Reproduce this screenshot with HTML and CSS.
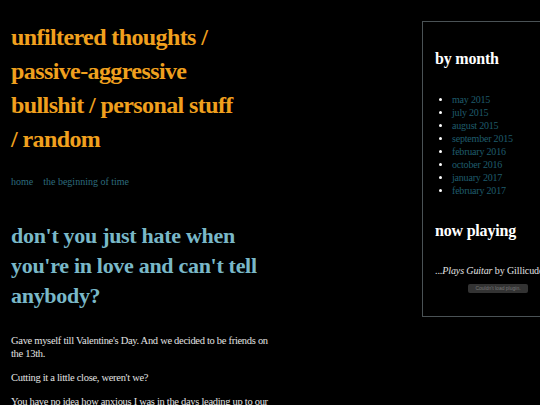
FILE: index.html
```html
<!DOCTYPE html>
<html>
<head>
<meta charset="utf-8">
<link rel="stylesheet" href="styles.css">
</head>
<body>
<div class="page">
  <main class="main">
    <h1 class="site-title">unfiltered thoughts / passive-aggressive bullshit / personal stuff /&nbsp;random</h1>
    <nav class="nav"><a href="#">home</a><a href="#">the beginning of time</a></nav>
    <article class="post">
      <h2 class="post-title">don't you just hate when you're in love and can't tell anybody?</h2>
      <p>Gave myself till Valentine's Day. And we decided to be friends on the 13th.</p>
      <p>Cutting it a little close, weren't we?</p>
      <p>You have no idea how anxious I was in the days leading up to our conversation.</p>
    </article>
  </main>
  <aside class="sidebar">
    <h3 class="side-title">by month</h3>
    <ul class="months">
      <li><a href="#">may 2015</a></li>
      <li><a href="#">july 2015</a></li>
      <li><a href="#">august 2015</a></li>
      <li><a href="#">september 2015</a></li>
      <li><a href="#">february 2016</a></li>
      <li><a href="#">october 2016</a></li>
      <li><a href="#">january 2017</a></li>
      <li><a href="#">february 2017</a></li>
    </ul>
    <h3 class="side-title np">now playing</h3>
    <p class="track"><span class="ell">...</span><em>Plays Guitar</em> by Gillicuddy</p>
    <div class="plugin">Couldn't load plugin.</div>
  </aside>
</div>
</body>
</html>
```

FILE: styles.css
```css
html, body {
  margin: 0;
  padding: 0;
  background: #000;
  overflow: hidden;
  height: 405px;
}
body {
  font-family: "Liberation Serif", "Times New Roman", serif;
  color: #e2e2e2;
}
.page {
  display: flex;
  align-items: flex-start;
  width: 700px;
}
.main {
  width: 270px;
  padding-left: 11px;
  flex: none;
}
.site-title {
  margin: 20px 0 0;
  max-width: 245px;
  font-size: 24px;
  line-height: 34px;
  font-weight: bold;
  letter-spacing: -0.6px;
  color: #f0a01e;
}
.nav {
  margin-top: 19px;
  font-size: 10px;
  line-height: 14px;
  display: flex;
  gap: 10px;
}
.nav a {
  color: #2d6b7d;
  text-decoration: none;
}
.post-title {
  margin: 32px 0 0;
  font-size: 22px;
  line-height: 30px;
  font-weight: bold;
  letter-spacing: -0.3px;
  color: #79b8c8;
}
.post p {
  font-size: 10.5px;
  line-height: 13px;
  letter-spacing: -0.3px;
  margin: 23px 0 0;
}
.post p + p {
  margin-top: 11px;
}
.sidebar {
  margin-left: 141px;
  margin-top: 21px;
  width: 200px;
  flex: none;
  border: 1px solid #4a5255;
  padding: 26px 0 20px 12px;
  box-sizing: border-box;
  height: 296px;
}
.side-title {
  margin: 0;
  font-size: 16px;
  line-height: 22px;
  letter-spacing: -0.2px;
  color: #fff;
  font-weight: bold;
}
.months {
  margin: 23px 0 0;
  padding-left: 17px;
  font-size: 10px;
  line-height: 13px;
  letter-spacing: -0.2px;
  color: #fff;
}
.months a {
  color: #1f5c6c;
  text-decoration: none;
}
.np {
  margin-top: 23px;
}
.track {
  margin: 22px 0 0;
  font-size: 10px;
  line-height: 14px;
  letter-spacing: -0.1px;
  white-space: nowrap;
  color: #e2e2e2;
}
.plugin {
  margin: 6px 0 0 33px;
  width: 60px;
  height: 9px;
  background: #333;
  border-radius: 2px;
  color: #777;
  font-family: "Liberation Sans", Arial, sans-serif;
  font-size: 5px;
  line-height: 9px;
  text-align: center;
  overflow: hidden;
  white-space: nowrap;
}
```
